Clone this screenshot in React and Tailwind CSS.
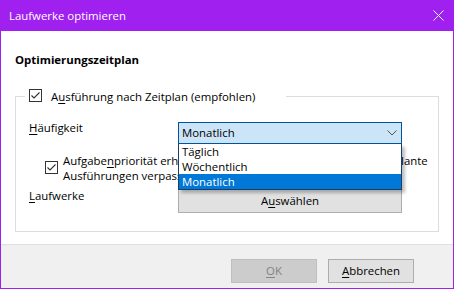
import React from "react";

function Check() {
  return (
    <span className="w-[13px] h-[13px] border border-[#333333] bg-white flex items-center justify-center shrink-0">
      <svg width="11" height="11" viewBox="0 0 11 11">
        <path d="M1.5 5.5 L4 8 L9.5 2.5" fill="none" stroke="#333333" strokeWidth="1.1" />
      </svg>
    </span>
  );
}

export default function App() {
  return (
    <div className="w-[454px] h-[289px] flex flex-col bg-white border-x border-b border-[#a020f0] font-['Open_Sans',sans-serif] text-[11.4px] leading-[16px] text-black overflow-hidden">
      <div className="h-[31px] shrink-0 bg-[#a020f0] flex items-center justify-between pl-[8px] pr-[9px] text-white">
        <span>Laufwerke optimieren</span>
        <svg width="11" height="11" viewBox="0 0 11 11">
          <path d="M0.5 0.5 L10.5 10.5 M10.5 0.5 L0.5 10.5" stroke="white" strokeWidth="1" />
        </svg>
      </div>
      <div className="flex-1 px-[14px] pt-[21px]">
        <div className="font-bold">Optimierungszeitplan</div>
        <fieldset className="mt-[20px] border border-[#dcdcdc] p-0 m-0">
          <legend className="ml-[9px] w-[261px] h-[16px] pl-[4px] flex items-start gap-[9px] p-0">
            <span className="pt-[1px]"><Check /></span>
            <span className="pt-[2px] leading-[14px]">
              A<u className="underline-offset-2">u</u>sführung nach Zeitplan (empfohlen)
            </span>
          </legend>
          <div className="pl-[13px] pb-[18px]">
            <div className="flex items-start mt-[16px]">
              <div className="w-[149px]"><u className="underline-offset-2">H</u>äufigkeit</div>
              <div className="relative mt-[2px] w-[224px]">
                <div className="h-[22px] border border-[#005499] bg-[#cce4f7] flex items-center justify-between pl-[3px] pr-[4px]">
                  <span>Monatlich</span>
                  <svg width="10" height="6" viewBox="0 0 10 6">
                    <path d="M0.5 0.5 L5 5 L9.5 0.5" fill="none" stroke="#555555" strokeWidth="1" />
                  </svg>
                </div>
                <div className="absolute left-0 top-full w-[224px] z-10 bg-white border-x border-b border-[#1b3d66] shadow-[3px_3px_3px_rgba(0,0,0,0.25)] flex flex-col leading-[15px]">
                  <div className="h-[15px] pl-[3px]">Täglich</div>
                  <div className="h-[15px] pl-[3px]">Wöchentlich</div>
                  <div className="h-[15px] pl-[3px] bg-[#0078d7] text-white">Monatlich</div>
                </div>
              </div>
            </div>
            <div className="flex items-start mt-[9px] ml-[16px] gap-[5px] leading-[15px]">
              <span className="mt-[8px]"><Check /></span>
              <span className="whitespace-nowrap">
                Aufgabe<u className="underline-offset-2">n</u>priorität erhöhen, wenn drei aufeinanderfolgende geplante
                <br />
                Ausführungen verpasst werden
              </span>
            </div>
            <div className="flex items-start mt-[5px]">
              <div className="w-[149px]"><u className="underline-offset-2">L</u>aufwerke</div>
              <div className="mt-[1px] w-[224px] h-[24px] border border-[#adadad] bg-[#e1e1e1] flex items-center justify-center">
                <span>A<u className="underline-offset-2">u</u>swählen</span>
              </div>
            </div>
          </div>
        </fieldset>
      </div>
      <div className="h-[44px] shrink-0 border-t border-[#dfdfdf] bg-[#f0f0f0] flex justify-end items-start pt-[14px] pr-[39px] gap-[11px]">
        <div className="w-[86px] h-[24px] border border-[#bfbfbf] bg-[#cccccc] text-[#838383] flex items-center justify-center">
          <span><u className="underline-offset-2">O</u>K</span>
        </div>
        <div className="w-[86px] h-[24px] border border-[#adadad] bg-[#e1e1e1] flex items-center justify-center">
          <span><u className="underline-offset-2">A</u>bbrechen</span>
        </div>
      </div>
    </div>
  );
}
